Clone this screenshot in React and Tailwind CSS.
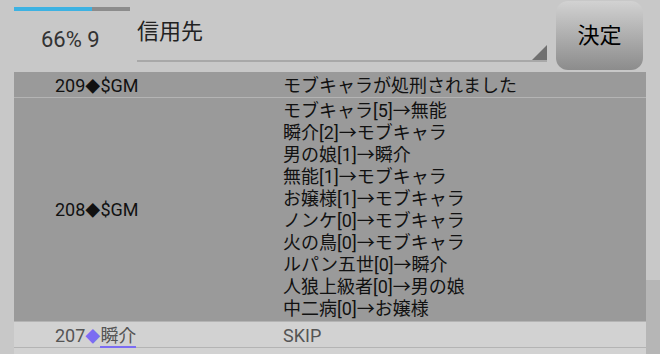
const LINES = [
  "モブキャラ[5]→無能",
  "瞬介[2]→モブキャラ",
  "男の娘[1]→瞬介",
  "無能[1]→モブキャラ",
  "お嬢様[1]→モブキャラ",
  "ノンケ[0]→モブキャラ",
  "火の鳥[0]→モブキャラ",
  "ルパン五世[0]→瞬介",
  "人狼上級者[0]→男の娘",
  "中二病[0]→お嬢様",
];

export default function App() {
  return (
    <div
      className="w-[660px] h-[354px] overflow-hidden bg-[#c8c8c8] relative"
      style={{ fontFamily: "Roboto, 'Noto Sans CJK JP', sans-serif" }}
    >
      {/* header */}
      <div className="flex h-[72px]">
        <div className="w-[137px] pl-[14px] pt-[7px]">
          <div className="flex w-[116px] h-[4px] bg-[#8c8c8c]">
            <div className="w-[78px] bg-[#3db2e2]" />
          </div>
          <div className="pl-[27px] pt-[14px] text-[22px] leading-[30px] text-[#333]">66% 9</div>
        </div>
        <div className="w-[410px] relative h-[62px] border-b-2 border-[#a8a8a8]">
          <div className="pt-[17px] text-[22px] leading-[30px] text-[#222]">信用先</div>
          <svg className="absolute right-0 bottom-0" width="15" height="15" viewBox="0 0 15 15">
            <polygon points="15,0 15,15 0,15" fill="#707070" />
          </svg>
        </div>
        <div className="ml-[9px] mt-[1px] w-[87px] h-[69px] rounded-[12px] bg-gradient-to-b from-[#d2d2d2] to-[#8c8c8c] flex items-center justify-center text-[22px] text-black">
          決定
        </div>
      </div>

      {/* table */}
      <div className="mx-[14px] text-[18px] text-[#111]">
        <div className="grid grid-cols-[269px_1fr] h-[26px] items-center bg-[#9a9a9a] border-b border-[#b4b4b4]">
          <div className="pl-[41px]">
            209<span className="text-[15px]">◆</span>$GM
          </div>
          <div>モブキャラが処刑されました</div>
        </div>
        <div className="grid grid-cols-[269px_1fr] items-center bg-[#9a9a9a] py-[1px] h-[224px] border-b border-[#b4b4b4]">
          <div className="pl-[41px]">
            208<span className="text-[15px]">◆</span>$GM
          </div>
          <div className="leading-[22px]">
            {LINES.map((l) => (
              <div key={l}>{l}</div>
            ))}
          </div>
        </div>
        <div className="grid grid-cols-[269px_1fr] h-[26px] items-center bg-[#d2d2d2] border-b border-[#b4b4b4] text-[#555]">
          <div className="pl-[41px]">
            207<span className="text-[15px] text-[#7b6cf2]">◆</span>
            <span className="border-b-2 border-[#7b6cf2]">瞬介</span>
          </div>
          <div>SKIP</div>
        </div>
        <div className="h-[20px] bg-[#d2d2d2]" />
      </div>
      <div className="absolute right-0 top-[280px] w-[14px] h-[74px] bg-[#b6b6b6]" />
    </div>
  );
}
